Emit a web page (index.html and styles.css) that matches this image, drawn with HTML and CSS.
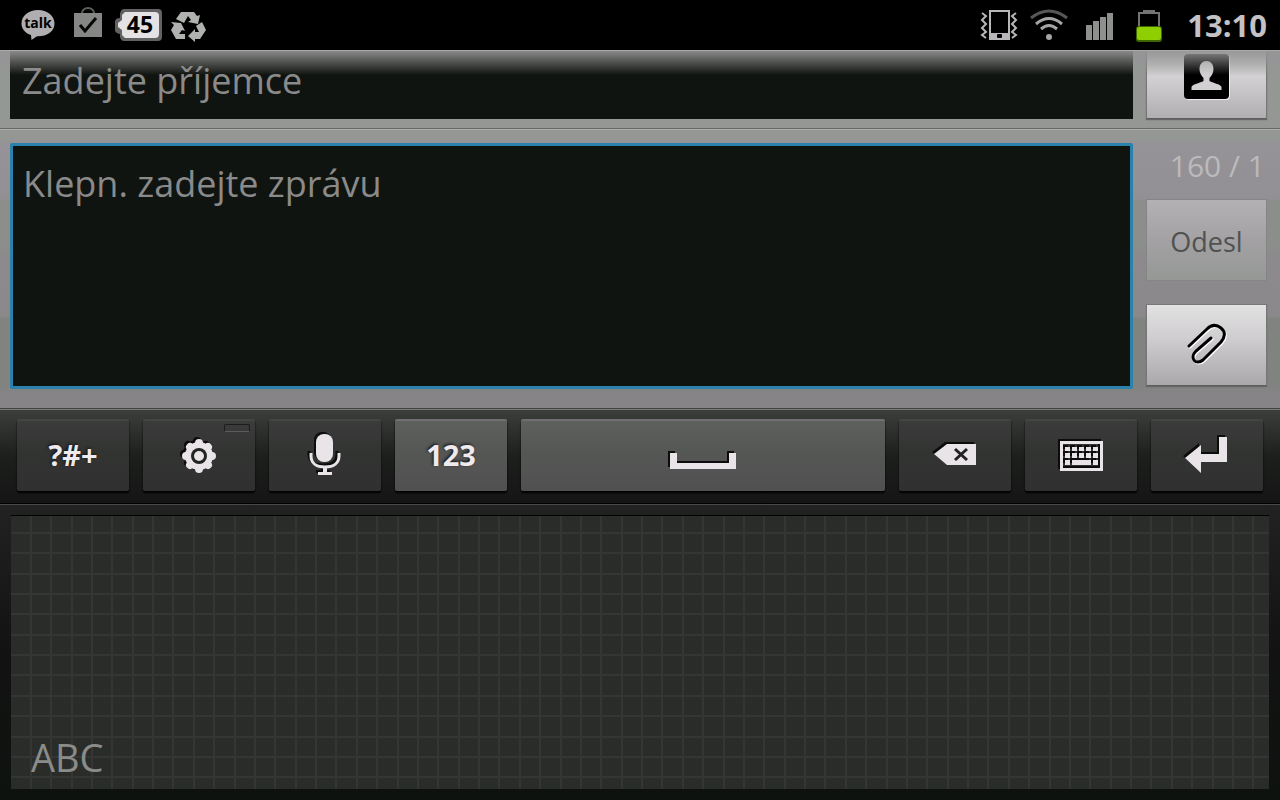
FILE: index.html
```html
<!DOCTYPE html>
<html lang="cs">
<head>
<meta charset="UTF-8">
<meta name="viewport" content="width=device-width, initial-scale=1.0">
<title>Nová zpráva</title>
<link rel="stylesheet" href="styles.css">
</head>
<body>

<header class="status-bar">
    <svg class="status-icon" viewBox="0 0 50 50">
        <path d="M25 10c-9 0-16.500 5.700-16.500 13.500 0 5.400 3.700 9.600 9.500 11.600l.5 5 5.500-3.800c10 .3 17.500-4.800 17.500-12.800C41.500 15.700 34 10 25 10z" fill="#b0aeb0"/>
        <text class="talk-text" x="25" y="28">talk</text>
    </svg>
    <svg class="status-icon" viewBox="0 0 50 50">
        <path d="M19 14v-1a6 5 0 0 1 12 0v1" fill="none" stroke="#5c5e5c" stroke-width="2"/>
        <path d="M11 13h28v24H11z" fill="#858785"/>
        <path d="M17 25l5 6 11-13" fill="none" stroke="#050505" stroke-width="3"/>
    </svg>
    <svg class="status-icon" viewBox="0 0 50 50">
        <path d="M11 9h34q4 0 4 4v24q0 4-4 4H11q-3 0-4-4v-3q-5-1-5-4v-8q0-4 5-4v-4q1-5 4-5z" fill="#626262"/>
        <path d="M12 12h30q4 0 4 4v18q0 4-4 4H12l-3-3v-5l-4-3v-4l4-3v-5z" fill="#e4e2e4"/>
        <text class="level-text" x="27" y="33">45</text>
    </svg>
    <svg class="status-icon" viewBox="0 0 50 50">
        <g fill="#b0b2b0">
            <path d="M18 12h13l3 4 3-1-2 9-10-2 3-2-3-4-4 7-8-4z"/>
            <path d="M8 22l10 1 4 8-3-1-3 4h6v5h-9l-5-9 3-5z"/>
            <path d="M33 26l6-4 4 8-6 9h-5v3l-7-6 7-7v3h4z"/>
        </g>
    </svg>
    <div class="status-space"></div>
    <svg class="status-icon" viewBox="0 0 50 50">
        <rect x="16" y="11" width="19" height="28" fill="none" stroke="#b8b6b8" stroke-width="2"/>
        <path d="M15 33h21v7H15z" fill="#b8b6b8"/>
        <rect x="23" y="34" width="5" height="4" rx="1" fill="#000"/>
        <path d="M8 13l4 3-4 4 4 4-4 4 4 4-4 3 4 3M42 13l-4 3 4 4-4 4 4 4-4 4 4 3-4 3" fill="none" stroke="#b8b6b8" stroke-width="2"/>
    </svg>
    <svg class="status-icon" viewBox="0 0 50 50" fill="none" stroke-width="3">
        <path d="M7 18q18-14 36 0" stroke="#555755"/>
        <path d="M12 24q13-11 26 0" stroke="#a4a6a4"/>
        <path d="M17 29q8-7 16 0" stroke="#a4a6a4"/>
        <circle cx="25" cy="37" r="3" fill="#a4a6a4"/>
    </svg>
    <svg class="status-icon" viewBox="0 0 50 50">
        <path d="M12 25h6v15h-6zM19 21h6v19h-6zM26 17h6v23h-6zM33 13h6v27h-6z" fill="#8e908e"/>
    </svg>
    <svg class="status-icon" viewBox="0 0 50 50">
        <path d="M15 30V13h20v17" fill="none" stroke="#737573" stroke-width="2"/>
        <path d="M19 10h12v3H19z" fill="#737573"/>
        <rect x="12" y="26" width="26" height="16" rx="3" fill="#3d6600"/>
        <rect x="13" y="27" width="24" height="13" rx="2" fill="#8fce00"/>
    </svg>
    <time class="clock">13:10</time>
</header>

<main class="compose">
    <div class="recipient-row">
        <input class="recipient" type="text" placeholder="Zadejte příjemce" aria-label="Příjemce">
        <button class="side-button contact" aria-label="Kontakty">
            <svg width="46" height="46" viewBox="0 0 46 46">
                <rect x="1" y="1" width="45" height="45" rx="4" fill="#eee"/>
                <rect width="45" height="45" rx="4" fill="#000"/>
                <path d="M22.500 7c-4 0-7 3-7 8 0 4 2 7 4 9v3c-3 2-11 3-12 6v3h30v-3c-1-3-9-4-12-6v-3c2-2 4-5 4-9 0-5-3-8-7-8z" fill="#d2d0d2"/>
            </svg>
        </button>
    </div>
    <div class="message-row">
        <textarea class="message" placeholder="Klepn. zadejte zprávu" aria-label="Zpráva"></textarea>
        <div class="side">
            <div class="counter">160 / 1</div>
            <button class="side-button send" disabled>Odesl</button>
            <button class="side-button" aria-label="Přiložit">
                <svg width="46" height="46" viewBox="0 0 46 46" fill="none" stroke-linecap="round" stroke-width="3">
                    <path d="M5 24L23 7c4-4 9-5 14-1s4 9 0 14L19 38c-7 6-14-2-7-9L27 16" stroke="#fff" transform="translate(1 1)"/>
                    <path d="M5 24L23 7c4-4 9-5 14-1s4 9 0 14L19 38c-7 6-14-2-7-9L27 16" stroke="#000"/>
                </svg>
            </button>
        </div>
    </div>
</main>

<section class="keys">
    <button class="key">?#+</button>
    <button class="key settings" aria-label="Nastavení">
        <svg class="key-icon" viewBox="0 -2 50 50">
            <circle cx="25" cy="25" r="14"/>
            <g stroke="#e8e4e8" stroke-width="8" stroke-linecap="round">
                <path d="M25 12v26M12 25h26M16 16l18 18M34 16L16 34"/>
            </g>
            <circle cx="25" cy="25" r="8" fill="#222422"/>
            <circle cx="25" cy="25" r="5"/>
        </svg>
    </button>
    <button class="key" aria-label="Hlasové zadávání">
        <svg class="key-icon" viewBox="0 -2 50 50">
            <rect x="16" y="3" width="17" height="28" rx="8"/>
            <path d="M11 22v3c0 7 5 11 14 11s14-4 14-11v-3" fill="none" stroke="#e8e4e8" stroke-width="3"/>
            <path d="M23 36h4v5h5v3H18v-3h5z"/>
        </svg>
    </button>
    <button class="key light">123</button>
    <button class="key light space" aria-label="Mezera">
        <svg class="space-icon" viewBox="0 0 70 50">
            <path d="M2 24h7v10h52V24h7v16H2z"/>
        </svg>
    </button>
    <button class="key" aria-label="Smazat">
        <svg class="key-icon" viewBox="0 0 50 50">
            <path d="M4 25L17 15h29v21H17z"/>
            <path d="M25 20l12 11M37 20L25 31" stroke="#222" stroke-width="3"/>
        </svg>
    </button>
    <button class="key" aria-label="Klávesnice">
        <svg class="key-icon" viewBox="0 0 50 50">
            <path fill-rule="evenodd" d="M4 12h43v30H4zM7 15v24h37V15z"/>
            <path d="M9 18h5v4H9zM16 18h5v4h-5zM23 18h5v4h-5zM30 18h5v4h-5zM37 18h5v4h-5zM9 24h5v5H9zM16 24h5v5h-5zM23 24h5v5h-5zM30 24h5v5h-5zM37 24h5v5h-5zM9 31h5v5H9zM16 31h19v5H16zM37 31h5v5h-5z"/>
        </svg>
    </button>
    <button class="key" aria-label="Enter">
        <svg class="key-icon" viewBox="0 0 50 50">
            <path d="M37 8h8v25H19v11L3 29l16-13v9h18z"/>
        </svg>
    </button>
</section>

<section class="writing">
    <div class="pad">
        <svg class="pad-grid" width="100%" height="100%">
            <defs>
                <!-- 8 cells per tile -->
                <pattern id="cells" x="19" y="16" width="163" height="163" patternUnits="userSpaceOnUse">
                    <path d="M0 0h2v163H0zM20 0h2v163h-2zM41 0h2v163h-2zM61 0h2v163h-2zM81 0h2v163h-2zM102 0h2v163h-2zM122 0h2v163h-2zM142 0h2v163h-2z"/>
                    <path d="M0 0h163v2H0zM0 20h163v2H0zM0 41h163v2H0zM0 61h163v2H0zM0 81h163v2H0zM0 102h163v2H0zM0 122h163v2H0zM0 142h163v2H0z"/>
                </pattern>
            </defs>
            <rect width="100%" height="100%" fill="url(#cells)"/>
        </svg>
        <span class="mode">ABC</span>
    </div>
</section>

</body>
</html>
```
FILE: styles.css
```css
* { box-sizing: border-box; }
body {
    margin: 0;
    min-height: 100vh;
    display: flex;
    flex-direction: column;
    background-color: #101210;
    font-family: "Open Sans", "Noto Sans", sans-serif;
}
button, input, textarea {
    font-family: inherit;
    border: none;
    border-radius: 0;
}
svg { display: block; }

/* status bar */
.status-bar {
    height: 50px;
    display: flex;
    align-items: center;
    padding: 0 13px;
    background-color: #000;
}
.status-icon {
    width: 50px;
    height: 50px;
}
.status-space { flex: 1; }
.clock {
    margin-left: 13px;
    color: #c4c2c4;
    font-size: 31px;
    font-weight: bold;
    line-height: 50px;
}
.talk-text {
    font-size: 14px;
    font-weight: bold;
    text-anchor: middle;
}
.level-text {
    font-size: 23px;
    font-weight: bold;
    text-anchor: middle;
}

/* message form */
.compose {
    position: relative;
    border-bottom: 1px solid #424442;
    background: linear-gradient(#959397 0, #959397 14px, #949794 15px, #949794 88px, #959397 94px, #929094 149px, #8b8e8b 150px, #8b8e8b 195px, #8c8a8d 205px, #8a888b 267px, #808380 268px, #808380 335px, #868487 345px);
}
.compose::before {
    content: "";
    position: absolute;
    top: 0;
    left: 0;
    right: 0;
    height: 24px;
    border-top: 1px solid #aaa;
    background: linear-gradient(rgba(150,150,150,0.9), rgba(150,150,150,0));
    pointer-events: none;
}
.recipient-row, .message-row {
    display: flex;
    gap: 13px;
    padding: 0 13px 0 10px;
}
.recipient-row {
    height: 79px;
    padding-bottom: 9px;
    border-bottom: 1px solid #666866;
}
.recipient, .message {
    flex: 1;
    min-width: 0;
    background-color: #101410;
    color: #ddd;
    font-size: 36px;
    outline: none;
}
.recipient { padding: 0 12px 8px; }
.recipient::placeholder, .message::placeholder {
    color: #8a8a8a;
    opacity: 1;
}
.message-row {
    padding-top: 13px;
    padding-bottom: 19px;
    border-top: 1px solid #b0b2b0;
}
.message {
    height: 246px;
    padding: 12px 10px;
    border: 3px solid #2a82ac;
    border-radius: 2px;
    line-height: 52px;
    resize: none;
}
.side {
    width: 121px;
    display: flex;
    flex-direction: column;
}
.counter {
    height: 56px;
    padding-right: 2px;
    color: #bcbabc;
    font-size: 30px;
    line-height: 46px;
    text-align: right;
}
.side-button {
    width: 121px;
    height: 82px;
    display: flex;
    justify-content: center;
    align-items: center;
    padding: 0;
    border: 1px solid #777;
    border-bottom-color: #5c5e5c;
    background: linear-gradient(#e2e2e2, #d0ced0 40%, #aaa8aa);
    box-shadow: 0 1px 1px #666;
    cursor: pointer;
}
.contact {
    height: 69px;
    padding-bottom: 15px;
    border-top: none;
    background: linear-gradient(#b4b2b4, #d2d0d2 40%, #b0aeb0);
}
.send {
    margin-bottom: 23px;
    padding-top: 2px;
    border-color: #858585;
    background: linear-gradient(#b3b1b4, #a3a1a4 50%, #959895);
    box-shadow: none;
    color: #505250;
    font-size: 27px;
}

/* key row */
.keys {
    height: 94px;
    display: grid;
    grid-template-columns: repeat(10, 1fr);
    gap: 14px;
    padding: 9px 17px 12px;
    border-top: 1px solid #777977;
    background: linear-gradient(#3c3e3c, #1c1f1c 50%, #151515);
}
.key {
    height: 72px;
    display: flex;
    justify-content: center;
    align-items: center;
    padding: 0 0 4px;
    border-top: 2px solid #444644;
    border-radius: 2px;
    background: linear-gradient(#3b3b3b, #323432 45%, #303030);
    box-shadow: 0 2px 2px #000;
    color: #eeeaee;
    font-size: 29px;
    font-weight: bold;
    text-shadow: -1px -1px 3px #111;
    cursor: pointer;
}
.light {
    border-top-color: #706e70;
    background: linear-gradient(#5e605e, #555755 45%, #505050);
}
.space { grid-column: span 3; }
.key-icon, .space-icon {
    width: 50px;
    height: 50px;
    fill: #e8e4e8;
    filter: drop-shadow(-2px -2px 0 #0c0c0c);
}
.space-icon { width: 70px; }
.settings { position: relative; }
.settings::after {
    content: "";
    position: absolute;
    top: 3px;
    right: 5px;
    width: 24px;
    height: 6px;
    border: 1px solid #1c1c1c;
    border-bottom-color: #5c5c5c;
    border-radius: 2px;
}

/* handwriting pad */
.writing {
    flex: 1;
    display: flex;
    padding: 12px 11px 11px;
    border-top: 1px solid #000;
    background: linear-gradient(#222, #121212 50%, #0e120f);
    box-shadow: inset 0 1px 0 #484848;
}
.pad {
    position: relative;
    flex: 1;
    display: flex;
    align-items: flex-end;
    padding: 4px 20px;
    background-color: #2a2c2a;
    box-shadow: 0 -1px 0 #000;
}
.pad-grid {
    position: absolute;
    top: 0;
    left: 0;
    fill: #353535;
}
.mode {
    position: relative;
    color: #8a8c8a;
    font-size: 38px;
    line-height: 56px;
}
```
